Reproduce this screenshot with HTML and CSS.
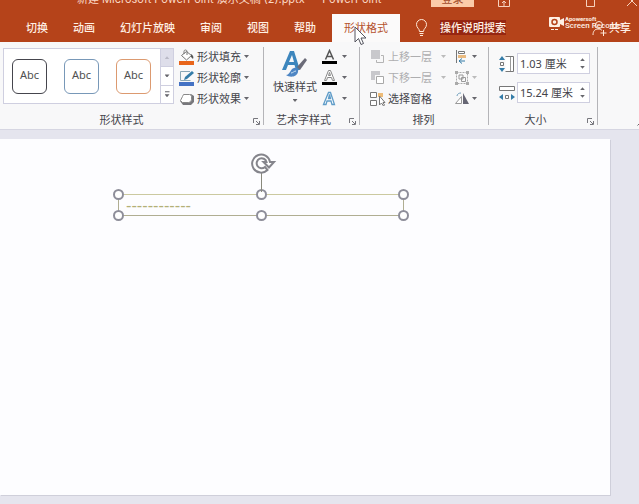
FILE: index.html
```html
<!DOCTYPE html>
<html lang="zh-CN">
<head>
<meta charset="utf-8">
<meta name="viewport" content="width=device-width, initial-scale=1">
<title>PowerPoint</title>
<link rel="stylesheet" href="styles.css">
</head>
<body>
<header class="titlebar">
  <span class="doc-title">新建 Microsoft PowerPoint 演示文稿 (2).pptx &nbsp;-&nbsp; PowerPoint</span>
  <button class="login">登录</button>
  <div class="window-controls">
    <button aria-label="功能区显示选项"><svg width="12" height="12" viewBox="0 0 12 12"><path d="M.5 1.500h11v10H.5zM.5 4.500h11M6 11V6M4 8l2-2 2 2"/></svg></button>
    <button aria-label="最大化"><svg width="12" height="12" viewBox="0 0 12 12"><path d="M2.500 2.500h8v9h-8z"/></svg></button>
    <button aria-label="关闭"><svg width="12" height="12" viewBox="0 0 12 12"><path d="M1 1l10 10M11 1L1 11"/></svg></button>
  </div>
</header>

<nav class="tabs">
  <button class="tab">切换</button>
  <button class="tab">动画</button>
  <button class="tab">幻灯片放映</button>
  <button class="tab">审阅</button>
  <button class="tab">视图</button>
  <button class="tab">帮助</button>
  <button class="tab active">形状格式</button>
  <svg class="bulb" width="13" height="18" viewBox="0 0 13 18"><path d="M4.500 12.500c0-3-3-3.500-3-7a5 5 0 0 1 10 0c0 3.500-3 4-3 7zM4.500 14.500h4M5 16.500h3"/></svg>
  <button class="tell-me"><span>操作说明搜索</span></button>
  <button class="share"><svg width="16" height="16" viewBox="0 0 16 16"><circle cx="7" cy="5" r="3.500"/><path d="M1 15c0-4 2-6 5-6 2 0 3 .5 4 1.500M11.500 10v6M8.500 13h6"/></svg>共享</button>
  <div class="recorder-mark">
    <svg width="17" height="16" viewBox="0 0 17 16"><path fill="#fff0e4" d="M2 1h9q1 0 1 1v2l4-2v8l-4-2v2q0 1-1 1H2q-1 0-1-1V2q0-1 1-1z"/><circle cx="6.500" cy="6" r="2.500" fill="#fff0e4" stroke="#b5431a" stroke-width="1.500"/><path d="M3 13.500h7" stroke="#fff0e4" stroke-dasharray="3 1"/></svg>
    <div><small>Apowersoft</small><b>Screen Recorder</b></div>
  </div>
</nav>

<main class="app">
<section class="ribbon">
  <div class="group shape-styles">
    <div class="group-body">
      <div class="gallery">
        <button class="style black">Abc</button>
        <button class="style blue">Abc</button>
        <button class="style orange">Abc</button>
        <div class="gallery-scroll">
          <button class="off" aria-label="上一行"><i class="caret up"></i></button>
          <button aria-label="下一行"><i class="caret"></i></button>
          <button aria-label="其他"><i class="caret more"></i></button>
        </div>
      </div>
      <div class="commands">
        <button class="cmd"><svg width="16" height="16" viewBox="0 0 16 16"><path d="M2.500 6.500l5-4 5 4-5 4.500zM5 5V2.500c0-2 3-2 3 0V6" fill="#fff" stroke="#777"/><path d="M12 5c2 1 3 3 2 5l-2-2z" fill="#555"/><path d="M0 12h15v4H0z" fill="#e8651b"/></svg>形状填充<i class="caret"></i></button>
        <button class="cmd"><svg width="16" height="16" viewBox="0 0 16 16"><path d="M11 1.500H1.500v9h10" fill="none" stroke="#8aa6b6"/><path d="M5 10l1-3 7-6 2 2-7 6z" fill="#347ca8"/><path d="M0 12h15v4H0z" fill="#4472c4"/></svg>形状轮廓<i class="caret"></i></button>
        <button class="cmd"><svg width="16" height="16" viewBox="0 0 16 16"><path d="M1 10l3 4h8l3-3V5l-3-2z" fill="#77777c"/><path d="M4.500 3.500h6q2 0 2 2v3q0 3-3 3h-6l-2-2 2-4z" fill="#fff" stroke="#888"/></svg>形状效果<i class="caret"></i></button>
      </div>
    </div>
    <footer>形状样式</footer>
    <button class="launcher" aria-label="设置形状格式"><svg width="7" height="7" viewBox="0 0 7 7"><path d="M.5 5V.5H5M3 3l3 3M6.500 3v3.500H3"/></svg></button>
  </div>

  <div class="group wordart">
    <div class="group-body">
      <button class="quick"><svg width="28" height="29" viewBox="0 0 28 29"><path d="M1 20L9 1h4l6 19h-4l-1.500-5H7l-2 5zM8 12h5l-2-7z" fill="#3d86bd"/><path d="M16 17l8-9 2 2-7 10z" fill="#6b6b78"/><path d="M5 25c4 0 4-6 8-7 3-1 5 1 4 4-1 5-8 6-12 3z" fill="#4e86c4"/><path d="M10 23c2 0 3-2 5-2" stroke="#cfe4f3" fill="none"/></svg><span>快速样式</span><i class="caret"></i></button>
      <div class="commands">
        <button class="cmd" aria-label="文本填充"><svg width="16" height="16" viewBox="0 0 16 16"><path d="M3.500 10.500L7.500 1.500l4 9M5 7.500h5" fill="none" stroke="#555" stroke-width="1.500"/><path d="M0 12h15v3H0z"/></svg><i class="caret"></i></button>
        <button class="cmd" aria-label="文本轮廓"><svg width="16" height="16" viewBox="0 0 16 16"><path d="M2.500 10.500L6.500.5h2l4 10h-2l-1-3h-4l-1 3zM6.500 5.500h2l-1-3z" fill="#fff" stroke="#888"/><path d="M0 12h15v3H0z"/></svg><i class="caret"></i></button>
        <button class="cmd" aria-label="文本效果"><svg width="16" height="16" viewBox="0 0 16 16"><path d="M1.500 13.500L6.500 1.500h2l4 12h-2.500l-1-3.500h-4l-1 3.500zM6.500 7.500h2l-1-4z" fill="#fff" stroke="#5f9cc8" stroke-width="1.300"/></svg><i class="caret"></i></button>
      </div>
    </div>
    <footer>艺术字样式</footer>
    <button class="launcher" aria-label="设置文本效果格式"><svg width="7" height="7" viewBox="0 0 7 7"><path d="M.5 5V.5H5M3 3l3 3M6.500 3v3.500H3"/></svg></button>
  </div>

  <div class="group arrange">
    <div class="group-body">
      <div class="commands">
        <button class="cmd muted" disabled><svg width="16" height="16" viewBox="0 0 16 16"><path d="M1 1h9v9H1z" fill="#c8c8cc"/><path d="M11 6.500h2.500v7h-7V11" fill="none" stroke="#b4b4b4"/></svg>上移一层<i class="caret"></i></button>
        <button class="cmd muted" disabled><svg width="16" height="16" viewBox="0 0 16 16"><path d="M1 1h9v4H5v5H1z" fill="#c8c8cc"/><path d="M6.500 6.500h7v7h-7z" fill="#fff" stroke="#a8a8a8"/></svg>下移一层<i class="caret"></i></button>
        <button class="cmd"><svg width="16" height="16" viewBox="0 0 16 16"><path d="M.5 1.500h6v5h-6zM.5 9.500h6v5h-6z" fill="#fff" stroke="#777"/><path d="M8 2h5v4H8z" fill="#eebc78"/><path d="M9.500 5v9l2-2 2 3 1-1-1.500-2.500h2z" fill="#fff" stroke="#777"/></svg>选择窗格</button>
      </div>
      <div class="commands">
        <button class="cmd" aria-label="对齐"><svg width="16" height="16" viewBox="0 0 16 16"><path d="M2.500 1v13" stroke="#777"/><path d="M4.500 2.500h6v2h-6z" fill="#fff" stroke="#777"/><path d="M4 6h8v3H4z" fill="#e9ba80"/><path d="M5 12h6M8 9.500L5 12l3 2.500" fill="none" stroke="#347ca8"/></svg><i class="caret"></i></button>
        <button class="cmd muted" disabled aria-label="组合"><svg width="16" height="16" viewBox="0 0 16 16"><path d="M2.500 2.500h11v11h-11z" fill="none" stroke="#aaa" stroke-dasharray="2 1"/><path d="M5 5h4v4H5zM7.500 7.500h4v4h-4z" fill="none" stroke="#999"/><path d="M1 1h3v3H1zM12 1h3v3h-3zM1 12h3v3H1zM12 12h3v3h-3z" fill="#aaa"/></svg><i class="caret"></i></button>
        <button class="cmd" aria-label="旋转"><svg width="16" height="16" viewBox="0 0 16 16"><path d="M1.500 12.500h6v-7z" fill="#fff" stroke="#999"/><path d="M9 2v11h6z" fill="#666674"/><path d="M3 5c0-2 2-3 4-3" fill="none" stroke="#6f9fbd"/></svg><i class="caret"></i></button>
      </div>
    </div>
    <footer>排列</footer>
  </div>

  <div class="group size">
    <div class="group-body">
      <div class="field">
        <label for="shape-height" aria-label="高度"><svg width="16" height="16" viewBox="0 0 16 16"><path d="M6.500.5h8v15h-8" fill="#fff" stroke="#777"/><path d="M11.500 1v14" stroke="#999"/><path d="M1.500 6.500h3v3h-3z" fill="#fff" stroke="#777"/><path d="M3 0l3 4H0zM3 16l3-4H0z" fill="#347ca8"/></svg></label>
        <div class="spin"><input id="shape-height" value="1.03 厘米"><span><button aria-label="增加高度"><i class="caret up"></i></button><button aria-label="减小高度"><i class="caret"></i></button></span></div>
      </div>
      <div class="field">
        <label for="shape-width" aria-label="宽度"><svg width="16" height="16" viewBox="0 0 16 16"><path d="M.5 1.500h15v4H.5z" fill="#fff" stroke="#777"/><path d="M6.500 10.500h3v3h-3z" fill="#fff" stroke="#777"/><path d="M0 12l4-3v6zM16 12l-4-3v6z" fill="#347ca8"/></svg></label>
        <div class="spin"><input id="shape-width" value="15.24 厘米"><span><button aria-label="增加宽度"><i class="caret up"></i></button><button aria-label="减小宽度"><i class="caret"></i></button></span></div>
      </div>
    </div>
    <footer>大小</footer>
    <button class="launcher" aria-label="大小和位置"><svg width="7" height="7" viewBox="0 0 7 7"><path d="M.5 5V.5H5M3 3l3 3M6.500 3v3.500H3"/></svg></button>
  </div>
  <button class="collapse" aria-label="折叠功能区"><svg width="8" height="5" viewBox="0 0 8 5"><path d="M.5 4.500L4 1l3.500 3.500" fill="none" stroke="#666"/></svg></button>
</section>

<section class="workspace">
  <div class="slide">
    <div class="textbox">
      <p>------------</p>
      <i class="handle top left"></i><i class="handle top center"></i><i class="handle top right"></i>
      <i class="handle bottom left"></i><i class="handle bottom center"></i><i class="handle bottom right"></i>
      <svg class="rotate" width="26" height="40" viewBox="0 0 26 40"><path d="M10.500 21v19" stroke="#89897c"/><path d="M19 10h4l-5 5.500-5.500-5.500h3a5 5 0 1 0-1.500 5l2.500 3A9 9 0 1 1 19 10z" fill="#fff" stroke="#85858c" stroke-width="2"/></svg>
    </div>
  </div>
</section>
</main>
<svg class="pointer" width="13" height="20" viewBox="0 0 13 20"><path d="M1 1v15l3.500-3.500L7 18.500l2.500-1L7 12h5z" fill="#fff" stroke="#54545e"/></svg>
</body>
</html>
```
FILE: styles.css
```css
* { box-sizing: border-box; }

body {
  margin: 0;
  min-height: 100vh;
  display: flex;
  flex-direction: column;
  overflow: hidden;
  background: #e5e5ee;
  color: #44444a;
  font: 11px/16px "Noto Sans", "Noto Sans CJK SC", sans-serif;
}

button, input {
  margin: 0;
  padding: 0;
  border: 0;
  background: none;
  color: inherit;
  font: inherit;
}

button { white-space: nowrap; }
svg { display: block; flex: none; }

/* Title bar, scrolled half out of view */
.titlebar {
  height: 14px;
  display: flex;
  align-items: flex-end;
  padding: 0 1px 7px 77px;
  overflow: hidden;
  background: #b5431a;
  color: #fbd9c6;
}
.doc-title { flex: 0 0 354px; white-space: nowrap; font-family: Inter, "Noto Sans CJK SC", sans-serif; }
.login { width: 43px; background: #fbcba8; color: #a04a2a; }
.window-controls { flex: 1; display: flex; justify-content: space-between; padding-left: 24px; }
.window-controls button:nth-child(2) { margin-left: 44px; }
.window-controls path { fill: none; stroke: #f6d2bd; }

/* Tabs */
.tabs {
  position: relative;
  height: 28px;
  display: flex;
  align-items: stretch;
  gap: 1px;
  padding: 0 8px 0 14px;
  background: #b5431a;
  color: #fff0e4;
  font-weight: 500;
}
.tab { padding: 0 12px; }
.tab.active { margin-left: 3px; background: #fbfafa; color: #b5532e; font-weight: 400; }
.bulb { align-self: center; margin: 0 11px 0 14px; }
.bulb path { fill: none; stroke: #ffe9d8; }
.tell-me { align-self: center; }
.tell-me span { background: #962611; }
.share { display: flex; align-items: center; gap: 1px; margin-left: auto; }
.share svg { fill: none; stroke: #ffe9d8; }
.recorder-mark { position: absolute; right: 13px; top: 2px; display: flex; }
.recorder-mark svg { fill: none; }
.recorder-mark div { width: 61px; display: flex; flex-direction: column; white-space: nowrap; }
.recorder-mark small { font: bold 6px/6px Roboto, sans-serif; }
.recorder-mark b { font: 500 8px/8px Roboto, sans-serif; }

/* Ribbon */
.app { flex: 1; display: flex; flex-direction: column; }
.ribbon {
  display: flex;
  height: 88px;
  background: #f8f8f9;
  border-bottom: 1px solid #d6d6e2;
}
.group { position: relative; display: flex; flex-direction: column; }
.group::after {
  content: "";
  position: absolute;
  inset: 5px 0 4px auto;
  width: 1px;
  background: #b4b4b8;
}
.group-body { display: flex; height: 70px; padding-top: 4px; }
.group footer { text-align: center; }
.launcher { position: absolute; right: 4px; bottom: 4px; }
.launcher path { fill: none; stroke: #77777d; }

.shape-styles { flex: 0 0 264px; padding-left: 3px; }
.wordart { flex: 0 0 96px; padding-left: 9px; }
.arrange { flex: 0 0 129px; padding-left: 10px; }
.size { flex: 0 0 109px; padding-left: 10px; }
.shape-styles footer { padding-right: 24px; }
.wordart footer { padding-right: 26px; }
.arrange footer { padding-right: 12px; }
.size footer { padding-right: 26px; }

.caret {
  flex: none;
  width: 5px;
  height: 3px;
  background: #66666c;
  clip-path: polygon(0 0, 100% 0, 50% 100%);
}
.caret.up { clip-path: polygon(0 100%, 100% 100%, 50% 0); }
.caret.more { height: 6px; clip-path: polygon(0 0, 100% 0, 100% 1px, 0 1px, 0 3px, 100% 3px, 50% 100%, 0 3px, 0 1px); }

.gallery {
  display: flex;
  align-items: center;
  gap: 17px;
  width: 171px;
  height: 56px;
  margin: 2px 5px 0 0;
  padding-left: 8px;
  border: 1px solid #cfcfe0;
  background: #fff;
}
.style { width: 35px; height: 35px; border: 1px solid; border-radius: 6px; padding-bottom: 2px; }
.style.black { border-color: #45454d; }
.style.blue { border-color: #7898b8; }
.style.orange { border-color: #dc9a70; }
.style::first-line { color: #505050; }
.gallery-scroll { align-self: stretch; flex: 1; display: flex; flex-direction: column; margin-left: -8px; }
.gallery-scroll button {
  flex: 1;
  display: flex;
  align-items: center;
  justify-content: center;
  border-left: 1px solid #cfcfe0;
}
.gallery-scroll button + button { border-top: 1px solid #cfcfe0; }
.gallery-scroll .off { background: #dedeea; }
.gallery-scroll .off .caret { background: #b9b9c6; }

.commands { display: flex; flex-direction: column; }
.cmd { display: flex; align-items: center; gap: 3px; height: 21px; }
.cmd svg { margin-right: -1px; }
.cmd.muted { color: #aeaeb0; }
.cmd.muted .caret { background: #bbb; }
.wordart .cmd { gap: 5px; }
.arrange .commands + .commands { margin-left: 8px; }
.arrange .commands:first-child .cmd { width: 76px; }
.arrange .commands:first-child .caret { margin-left: auto; }

.quick { display: flex; flex-direction: column; align-items: center; width: 44px; margin-right: 5px; padding-top: 4px; }
.quick span { margin-bottom: 4px; }

.size .group-body { flex-direction: column; gap: 8px; padding-top: 11px; }
.field { display: flex; align-items: center; gap: 2px; }
.spin { display: flex; width: 73px; height: 21px; border: 1px solid #cfcfe0; background: #fff; }
.spin input { flex: 1; min-width: 0; padding-left: 2px; }
.spin span { display: flex; flex-direction: column; justify-content: space-evenly; padding-right: 4px; }
.spin button { display: flex; }
.collapse { align-self: flex-end; margin: 0 -6px 3px auto; }

/* Slide */
.workspace { flex: 1; display: flex; padding: 9px 29px 9px 0; }
.slide { position: relative; flex: 1; background: #fdfdff; box-shadow: 1px 1px 0 #cfcfda; }
.textbox {
  position: absolute;
  left: 118px;
  top: 55px;
  width: 286px;
  height: 22px;
  border: 1px solid #b0ae92;
  border-top-color: #cbc9a0;
}
.textbox p { margin: 0; padding-left: 7px; color: #b3b077; font: 15px/22px "DejaVu Sans", sans-serif; }
.handle {
  position: absolute;
  width: 11px;
  height: 11px;
  border: 2px solid #8e8e9a;
  border-radius: 50%;
  background: #fff;
}
.top { top: -6px; }
.bottom { bottom: -6px; }
.left { left: -6px; }
.center { left: calc(50% - 5px); }
.right { right: -6px; }
.rotate { position: absolute; left: calc(50% - 10px); bottom: 23px; fill: none; }

.pointer { position: absolute; left: 354px; top: 26px; }
```
